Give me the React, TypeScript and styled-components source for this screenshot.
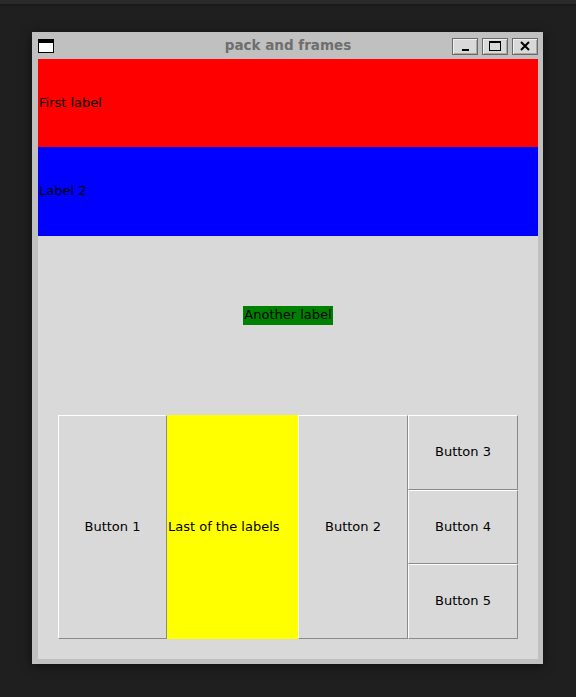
import * as React from "react";
import styled, { createGlobalStyle } from "styled-components";

const GlobalStyle = createGlobalStyle`
  html, body {
    margin: 0;
    padding: 0;
    background: #1f1f1f;
  }
  body {
    font-family: "DejaVu Sans", "Liberation Sans", sans-serif;
  }
`;

const Desktop = styled.div`
  width: 576px;
  height: 697px;
  box-sizing: border-box;
  padding: 32px 0 0 32px;
  background: linear-gradient(#2a2a2a 0, #2a2a2a 4px, #191919 4px, #191919 6px, #1f1f1f 6px);
`;

const Window = styled.div`
  width: 511px;
  box-sizing: border-box;
  background: #c0c0c0;
  padding: 0 5px 5px 6px;
  box-shadow: 0 2px 10px rgba(0, 0, 0, 0.55);
  display: flex;
  flex-direction: column;
`;

const TitleBar = styled.div`
  height: 27px;
  display: grid;
  grid-template-columns: 1fr auto 1fr;
  align-items: center;
`;

const AppIcon = styled.div`
  width: 16px;
  height: 14px;
  box-sizing: border-box;
  border: 1px solid #000;
  border-top-width: 4px;
  background: #fff;
  margin-top: 1px;
`;

const Title = styled.div`
  font-weight: bold;
  font-size: 13.5px;
  color: #6e6e6e;
  margin-top: -1px;
`;

const TitleButtons = styled.div`
  display: flex;
  gap: 4px;
  justify-content: flex-end;
  margin-top: 1px;
`;

const TitleButton = styled.div`
  width: 26px;
  height: 17px;
  box-sizing: border-box;
  border: 1px solid #6a6a6a;
  box-shadow: inset 1px 1px 0 #f0f0f0, inset -1px -1px 0 #a8a8a8;
  background: #d9d9d9;
  display: flex;
  align-items: center;
  justify-content: center;
`;

const Content = styled.div`
  height: 600px;
  background: #d9d9d9;
  display: flex;
  flex-direction: column;
`;

const ColorLabel = styled.div<{ $bg: string; $h: number }>`
  height: ${(p) => p.$h}px;
  box-sizing: border-box;
  background: ${(p) => p.$bg};
  display: flex;
  align-items: center;
  padding: 0 0 2px 1px;
  font-size: 13px;
  color: #000;
`;

const Middle = styled.div`
  height: 159px;
  display: flex;
  align-items: center;
  justify-content: center;
`;

const GreenLabel = styled.div`
  background: #008000;
  color: #000;
  font-size: 13px;
  height: 19px;
  line-height: 18px;
  padding: 0 1px;
`;

const ButtonFrame = styled.div`
  margin: 20px 20px 0;
  height: 224px;
  display: flex;
`;

const TkButton = styled.div<{ $w?: number }>`
  ${(p) => (p.$w ? `width: ${p.$w}px;` : "flex: 1;")}
  box-sizing: border-box;
  border-top: 1px solid #ffffff;
  border-left: 1px solid #ffffff;
  border-right: 1px solid #8a8a8a;
  border-bottom: 1px solid #8a8a8a;
  padding-bottom: 2px;
  display: flex;
  align-items: center;
  justify-content: center;
  font-size: 13px;
  color: #000;
`;

const YellowLabel = styled.div`
  width: 131px;
  background: #ffff00;
  display: flex;
  align-items: center;
  padding: 0 0 2px 1px;
  box-sizing: border-box;
  font-size: 13px;
  color: #000;
`;

const ButtonColumn = styled.div`
  width: 110px;
  display: flex;
  flex-direction: column;
`;

export default function App() {
  return (
    <>
      <GlobalStyle />
      <Desktop>
        <Window>
          <TitleBar>
            <AppIcon />
            <Title>pack and frames</Title>
            <TitleButtons>
              <TitleButton>
                <svg width="12" height="12" viewBox="0 0 12 12">
                  <rect x="3" y="9" width="7" height="2" fill="#000" />
                </svg>
              </TitleButton>
              <TitleButton>
                <svg width="14" height="12" viewBox="0 0 14 12">
                  <rect x="1.5" y="1.5" width="11" height="9" fill="none" stroke="#000" />
                  <rect x="1" y="1" width="12" height="2" fill="#000" />
                </svg>
              </TitleButton>
              <TitleButton>
                <svg width="12" height="12" viewBox="0 0 12 12">
                  <path d="M2 2 L10 10 M10 2 L2 10" stroke="#000" strokeWidth="2" />
                </svg>
              </TitleButton>
            </TitleButtons>
          </TitleBar>
          <Content>
            <ColorLabel $bg="#ff0000" $h={88}>First label</ColorLabel>
            <ColorLabel $bg="#0000ff" $h={89}>Label 2</ColorLabel>
            <Middle>
              <GreenLabel>Another label</GreenLabel>
            </Middle>
            <ButtonFrame>
              <TkButton $w={109}>Button 1</TkButton>
              <YellowLabel>Last of the labels</YellowLabel>
              <TkButton $w={110}>Button 2</TkButton>
              <ButtonColumn>
                <TkButton>Button 3</TkButton>
                <TkButton>Button 4</TkButton>
                <TkButton>Button 5</TkButton>
              </ButtonColumn>
            </ButtonFrame>
          </Content>
        </Window>
      </Desktop>
    </>
  );
}
